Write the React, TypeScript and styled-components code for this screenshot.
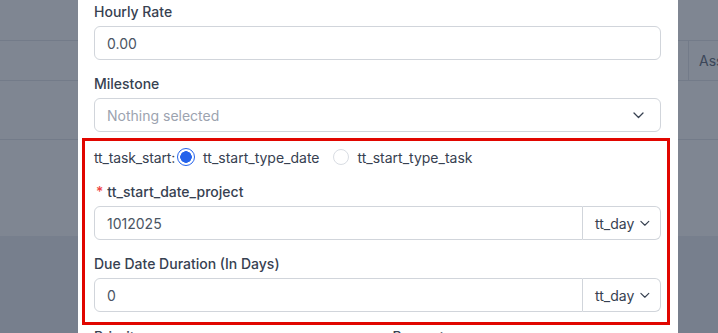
import React from "react";
import styled, { createGlobalStyle } from "styled-components";

const GlobalStyle = createGlobalStyle`
  html, body { margin: 0; padding: 0; }
  body { font-family: Inter, "Noto Sans", Arial, sans-serif; }
  * { box-sizing: border-box; }
`;

const Page = styled.div`
  position: relative;
  width: 100%;
  height: 333px;
  overflow: hidden;
  background: #eef0f3;
`;

const Table = styled.div`
  display: flex;
  flex-direction: column;
  background: #ffffff;
`;

const TableRow = styled.div<{ $h: number }>`
  height: ${(p) => p.$h}px;
  border-bottom: 1px solid #e5e7eb;
  display: flex;
  &:last-child { border-bottom: none; }
`;

const HeaderCell = styled.div<{ $w?: number; $divider?: boolean }>`
  display: flex;
  align-items: center;
  padding: 0 10px;
  font-size: 14px;
  color: #6b7280;
  ${(p) => (p.$w ? `width: ${p.$w}px;` : "flex: 1;")}
  ${(p) => (p.$divider ? "border-left: 1px solid #e5e7eb;" : "")}
  white-space: nowrap;
  overflow: hidden;
`;

const Overlay = styled.div`
  position: absolute;
  inset: 0;
  background: rgba(21, 34, 56, 0.55);
  display: flex;
  padding-left: 78px;
`;

const Modal = styled.div`
  width: 600px;
  background: #ffffff;
  padding: 2px 17px 0 16px;
  display: flex;
  flex-direction: column;
`;

const Field = styled.div<{ $gap?: number }>`
  display: flex;
  flex-direction: column;
  margin-top: ${(p) => p.$gap ?? 14}px;
`;

const Label = styled.label`
  font-size: 14px;
  line-height: 20px;
  font-weight: 500;
  color: #374151;
  margin-bottom: 4px;
`;

const Required = styled.span`
  color: #ef4444;
  margin-right: 4px;
  margin-left: 2px;
`;

const TextInput = styled.div<{ $placeholder?: boolean; $grouped?: boolean }>`
  height: 34px;
  flex: ${(p) => (p.$grouped ? "1 1 auto" : "0 0 34px")};
  border: 1px solid #d1d5db;
  border-radius: ${(p) => (p.$grouped ? "6px 0 0 6px" : "6px")};
  padding: 0 12px;
  display: flex;
  align-items: center;
  font-size: 14px;
  color: ${(p) => (p.$placeholder ? "#9ca3af" : "#4b5563")};
`;

const SelectChevron = styled.span`
  margin-left: auto;
  margin-right: 4px;
  display: flex;
`;

const Highlight = styled.div`
  margin: 6px -9px 1px -12px;
  border: 3px solid #e10600;
  padding: 6px 6px 10px 9px;
  display: flex;
  flex-direction: column;
`;

const RadioRow = styled.div`
  display: flex;
  align-items: center;
  height: 20px;
  font-size: 14px;
  color: #374151;
`;

const RadioTitle = styled.span`
  margin-right: 2px;
  letter-spacing: -0.15px;
`;

const RadioOption = styled.span`
  display: flex;
  align-items: center;
  gap: 8px;
  margin-right: 12px;
`;

const RadioDot = styled.span<{ $checked?: boolean }>`
  display: inline-block;
  border-radius: 50%;
  width: ${(p) => (p.$checked ? 18 : 16)}px;
  height: ${(p) => (p.$checked ? 18 : 16)}px;
  margin: 0 ${(p) => (p.$checked ? 0 : 1)}px;
  border: ${(p) => (p.$checked ? "1.5px solid #2563eb" : "1px solid #d9dde3")};
  background: ${(p) =>
    p.$checked
      ? "radial-gradient(circle, #2563eb 0 5.5px, #ffffff 6px)"
      : "#ffffff"};
`;

const Group = styled.div`
  display: flex;
  height: 34px;
`;

const Addon = styled.div`
  width: 78px;
  border: 1px solid #d1d5db;
  border-left: none;
  border-radius: 0 6px 6px 0;
  display: flex;
  align-items: center;
  gap: 6px;
  padding: 0 10px 0 12px;
  font-size: 14px;
  color: #374151;
`;

const SplitGrid = styled.div`
  display: grid;
  grid-template-columns: 1fr 1fr;
  gap: 30px;
  margin-top: 1px;
`;

const Chevron = () => (
  <svg width="11" height="7" viewBox="0 0 11 7" fill="none">
    <polyline
      points="1 1 5.5 5.5 10 1"
      stroke="#374151"
      strokeWidth="1.3"
      strokeLinecap="round"
      strokeLinejoin="round"
    />
  </svg>
);

export default function App() {
  return (
    <>
      <GlobalStyle />
      <Page>
        <Table>
          <TableRow $h={41} />
          <TableRow $h={40}>
            <HeaderCell />
            <HeaderCell $w={30} $divider>
              Assignee
            </HeaderCell>
          </TableRow>
          <TableRow $h={59} />
          <TableRow $h={96} />
        </Table>
        <Overlay>
          <Modal>
            <Field $gap={0}>
              <Label>Hourly Rate</Label>
              <TextInput>0.00</TextInput>
            </Field>
            <Field>
              <Label>Milestone</Label>
              <TextInput $placeholder>
                Nothing selected
                <SelectChevron>
                  <Chevron />
                </SelectChevron>
              </TextInput>
            </Field>
            <Highlight>
              <RadioRow>
                <RadioTitle>tt_task_start:</RadioTitle>
                <RadioOption>
                  <RadioDot $checked />
                  tt_start_type_date
                </RadioOption>
                <RadioOption>
                  <RadioDot />
                  tt_start_type_task
                </RadioOption>
              </RadioRow>
              <Field $gap={15}>
                <Label>
                  <Required>*</Required>tt_start_date_project
                </Label>
                <Group>
                  <TextInput $grouped>1012025</TextInput>
                  <Addon>
                    tt_day
                    <Chevron />
                  </Addon>
                </Group>
              </Field>
              <Field>
                <Label>Due Date Duration (In Days)</Label>
                <Group>
                  <TextInput $grouped>0</TextInput>
                  <Addon>
                    tt_day
                    <Chevron />
                  </Addon>
                </Group>
              </Field>
            </Highlight>
            <SplitGrid>
              <Label>Priority</Label>
              <Label>Percentage</Label>
            </SplitGrid>
          </Modal>
        </Overlay>
      </Page>
    </>
  );
}
